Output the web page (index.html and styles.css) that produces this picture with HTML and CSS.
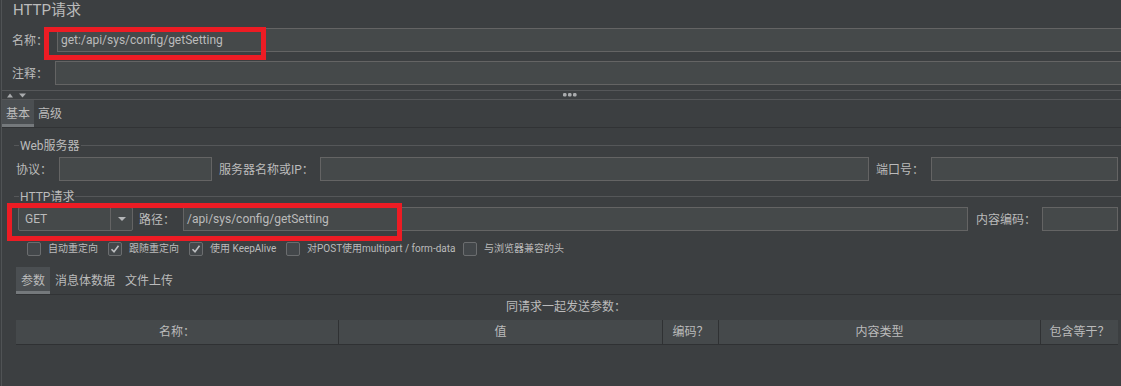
FILE: index.html
```html
<!DOCTYPE html>
<html lang="zh-CN">
<head>
  <meta charset="UTF-8">
  <title>HTTP请求</title>
  <link rel="stylesheet" href="styles.css">
</head>
<body>
  <div class="page">
    <div class="title">HTTP请求</div>

    <div class="form-row head-row">
      <span class="lbl lbl-name">名称：</span>
      <div class="field field-name">get:/api/sys/config/getSetting</div>
    </div>
    <div class="form-row head-row">
      <span class="lbl lbl-comment">注释：</span>
      <div class="field field-name"></div>
    </div>

    <div class="splitter">
      <svg class="split-arrows" width="20" height="5" viewBox="0 0 20 5">
        <polygon points="0,4.5 3,0.5 6,4.5" fill="#a9abad"/>
        <polygon points="12,0.5 19,0.5 15.5,4.5" fill="#a9abad"/>
      </svg>
      <svg class="split-dots" width="14" height="4" viewBox="0 0 14 4">
        <rect x="0" y="0" width="3.5" height="3.5" rx="1.2" fill="#a9abad"/>
        <rect x="5" y="0" width="3.5" height="3.5" rx="1.2" fill="#a9abad"/>
        <rect x="10" y="0" width="3.5" height="3.5" rx="1.2" fill="#a9abad"/>
      </svg>
    </div>

    <div class="tabs top-tabs">
      <span class="tab active">基本</span>
      <span class="tab">高级</span>
    </div>

    <div class="panel">
      <div class="group">
        <div class="group-title"><span>Web服务器</span></div>
        <div class="form-row group-row web-row">
          <span class="lbl lbl-protocol">协议：</span>
          <div class="field field-protocol"></div>
          <span class="lbl lbl-server">服务器名称或IP：</span>
          <div class="field field-server"></div>
          <span class="lbl lbl-port">端口号：</span>
          <div class="field field-port"></div>
        </div>
      </div>

      <div class="group group-http">
        <div class="group-title"><span>HTTP请求</span></div>
        <div class="form-row group-row http-row">
          <div class="combo">
            <div class="combo-value">GET</div>
            <div class="combo-arrow">
              <svg width="8" height="4" viewBox="0 0 8 4"><polygon points="0,0 8,0 4,4" fill="#b4b6b8"/></svg>
            </div>
          </div>
          <span class="lbl lbl-path">路径：</span>
          <div class="field field-path">/api/sys/config/getSetting</div>
          <span class="lbl lbl-encoding">内容编码：</span>
          <div class="field field-encoding"></div>
        </div>
      </div>

      <div class="check-row">
        <label class="check"><span class="box"></span>自动重定向</label>
        <label class="check"><span class="box"><svg width="12" height="12" viewBox="0 0 12 12"><path d="M2.5 6.2 L5 8.8 L9.5 2.8" fill="none" stroke="#bdbfc1" stroke-width="1.6"/></svg></span>跟随重定向</label>
        <label class="check"><span class="box"><svg width="12" height="12" viewBox="0 0 12 12"><path d="M2.5 6.2 L5 8.8 L9.5 2.8" fill="none" stroke="#bdbfc1" stroke-width="1.6"/></svg></span>使用 KeepAlive</label>
        <label class="check"><span class="box"></span>对POST使用multipart / form-data</label>
        <label class="check"><span class="box"></span>与浏览器兼容的头</label>
      </div>

      <div class="tabs sub-tabs">
        <span class="tab active">参数</span>
        <span class="tab">消息体数据</span>
        <span class="tab">文件上传</span>
      </div>

      <div class="caption">同请求一起发送参数：</div>

      <div class="table-head">
        <div class="th">名称：</div>
        <div class="th">值</div>
        <div class="th">编码？</div>
        <div class="th">内容类型</div>
        <div class="th">包含等于？</div>
      </div>
    </div>

    <div class="mark mark-name"></div>
    <div class="mark mark-path"></div>
  </div>
</body>
</html>
```

FILE: styles.css
```css
body {
  margin: 0;
  background-color: #3c3f41;
  color: #bbbbbb;
  font-family: Roboto, "Noto Sans CJK SC", sans-serif;
  font-size: 12px;
  overflow: hidden;
}

.page {
  position: relative;
  height: 386px;
  margin-left: 1px;
  border-left: 1px solid #505355;
}

.title {
  height: 20px;
  line-height: 20px;
  font-size: 15px;
  padding-left: 11px;
  margin-bottom: 8px;
}

.form-row {
  display: flex;
  align-items: center;
  height: 24px;
}

.head-row {
  padding-left: 10px;
}

.head-row + .head-row {
  margin-top: 9px;
}

.lbl {
  flex: none;
  padding-top: 1px;
  line-height: 16px;
  white-space: nowrap;
}

.lbl-name { width: 45px; }
.lbl-comment { width: 43px; }

.field {
  box-sizing: border-box;
  height: 24px;
  background-color: #45494a;
  border: 1px solid #646464;
  padding: 0 3px;
  line-height: 22px;
  white-space: nowrap;
  overflow: hidden;
}

.field-name {
  flex: 1;
  margin-right: -12px;
}

/* splitter between header and tabs */
.splitter {
  display: flex;
  align-items: center;
  height: 8px;
  margin-top: 5px;
  border-top: 1px solid #555759;
  border-bottom: 1px solid #555759;
}

.split-arrows {
  margin-left: 5px;
}

.split-dots {
  margin-left: 536px;
}

/* tabs */
.tabs {
  display: flex;
  height: 27px;
  border-bottom: 1px solid #313335;
}

.tab {
  padding: 4px 4px 0;
  line-height: 20px;
  border-bottom: 3px solid transparent;
}

.tab.active {
  background-color: #4b4f52;
  border-bottom-color: #75797c;
}

.panel {
  padding: 0 3px 0 12px;
}

.group-title {
  display: flex;
  align-items: center;
  height: 17px;
  margin-top: 9px;
  margin-right: -3px;
}

.group-title::before,
.group-title::after {
  content: "";
  height: 1px;
  background-color: #555759;
}

.group-title::before {
  width: 5px;
}

.group-title::after {
  flex: 1;
}

.group-title span {
  padding: 0 1px;
  line-height: 16px;
}

.group-http .group-title {
  margin-top: 7px;
}

.web-row {
  margin-top: 3px;
  padding-left: 2px;
}

.http-row {
  margin-top: 2px;
  padding-left: 4px;
}

.lbl-protocol { width: 43px; }
.field-protocol { width: 153px; }
.lbl-server { width: 101px; margin-left: 7px; }
.field-server { width: 549px; }
.lbl-port { width: 55px; margin-left: 7px; }
.field-port { flex: 1; }

.combo {
  display: flex;
  box-sizing: border-box;
  width: 115px;
  height: 24px;
  background-color: #45494a;
  border: 1px solid #646464;
  border-radius: 2px;
}

.combo-value {
  width: 85px;
  padding-left: 6px;
  line-height: 22px;
  border-right: 1px solid #646464;
}

.combo-arrow {
  display: flex;
  align-items: center;
  justify-content: center;
  flex: 1;
}

.lbl-path { width: 44px; margin-left: 6px; }
.field-path { width: 785px; }
.lbl-encoding { width: 66px; margin-left: 8px; }
.field-encoding { flex: 1; }

/* checkboxes */
.check-row {
  display: grid;
  grid-template-columns: 81px 81px 97px 177px auto;
  height: 14px;
  margin-top: 11px;
  padding-left: 13px;
}

.check {
  display: flex;
  align-items: center;
  gap: 7px;
  font-size: 10px;
  line-height: 14px;
  white-space: nowrap;
}

.box {
  display: flex;
  align-items: center;
  justify-content: center;
  box-sizing: border-box;
  width: 14px;
  height: 14px;
  background-color: #43474a;
  border: 1px solid #6b6d6f;
  border-radius: 2px;
}

.sub-tabs {
  margin-top: 11px;
  margin-left: 2px;
  margin-right: -3px;
}

.sub-tabs .tab {
  padding: 4px 5px 0;
}

.caption {
  height: 25px;
  line-height: 25px;
  text-align: center;
}

.table-head {
  display: grid;
  grid-template-columns: 323px 324px 56px 322px 1fr;
  margin-left: 2px;
  background-color: #45494b;
  border-bottom: 1px solid #2f3133;
}

.th {
  height: 24px;
  padding-top: 1px;
  box-sizing: border-box;
  line-height: 23px;
  text-align: center;
  border-right: 1px solid #2f3133;
}

.th:last-child {
  border-right: none;
}

/* red highlight frames */
.mark {
  position: absolute;
  box-sizing: border-box;
  border: 5px solid #ed1c24;
}

.mark-name {
  left: 42px;
  top: 27px;
  width: 222px;
  height: 33px;
}

.mark-path {
  left: 5px;
  top: 203px;
  width: 395px;
  height: 38px;
}
```
